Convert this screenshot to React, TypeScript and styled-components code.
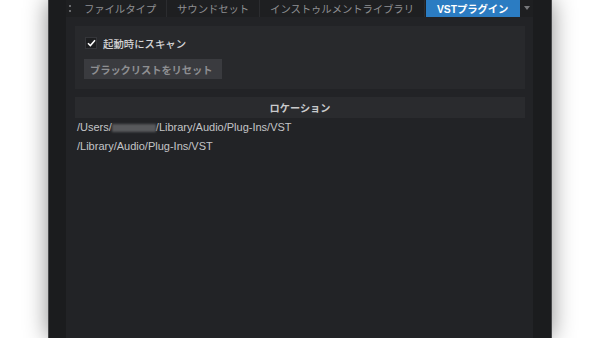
import styled, { createGlobalStyle } from "styled-components";

const GlobalStyle = createGlobalStyle`
  html, body {
    margin: 0;
    padding: 0;
    background: #ffffff;
    overflow: hidden;
  }
  body {
    font-family: "Liberation Sans", "Noto Sans CJK JP", sans-serif;
  }
`;

const Page = styled.div`
  width: 600px;
  height: 338px;
  display: flex;
  padding-left: 48px;
  box-sizing: border-box;
  overflow: hidden;
`;

const Window = styled.div`
  width: 504px;
  height: 338px;
  box-sizing: border-box;
  background: #1b1c1e;
  border-left: 1px solid #48494b;
  border-right: 1px solid #48494b;
  box-shadow: 0 0 22px rgba(0, 0, 0, 0.45);
  padding: 0 18px 0 17px;
  display: flex;
`;

const Panel = styled.div`
  flex: 1;
  display: flex;
  flex-direction: column;
  background: #222326;
`;

const TabBar = styled.div`
  height: 17px;
  display: flex;
  align-items: stretch;
  background: #1e1f21;
`;

const Grip = styled.div`
  width: 8px;
  display: flex;
  flex-direction: column;
  align-items: center;
  justify-content: center;
  gap: 3px;

  span {
    width: 2px;
    height: 2px;
    background: #6a6b6e;
  }
`;

const Tab = styled.div<{ $active?: boolean }>`
  display: flex;
  align-items: center;
  padding: ${p => (p.$active ? "0 11px" : "0 10px")};
  margin-left: ${p => (p.$active ? "1px" : "0")};
  font-size: 10.4px;
  letter-spacing: -0.1px;
  color: ${p => (p.$active ? "#ffffff" : "#8f9093")};
  background: ${p => (p.$active ? "#2b7cc2" : "transparent")};
  font-weight: ${p => (p.$active ? 600 : 400)};
  border-right: 1px solid ${p => (p.$active ? "transparent" : "#2b2c2f")};
  white-space: nowrap;
`;

const Arrow = styled.div`
  width: 0;
  height: 0;
  margin: 6px 0 0 4px;
  border-left: 3px solid transparent;
  border-right: 3px solid transparent;
  border-top: 4px solid #77787b;
`;

const Content = styled.div`
  flex: 1;
  display: flex;
  flex-direction: column;
  padding: 9px 8px 0 9px;
`;

const SettingsBox = styled.div`
  background: #28292c;
  padding: 11px 10px 10px 9px;
  display: flex;
  flex-direction: column;
  align-items: flex-start;
  gap: 10px;
`;

const CheckRow = styled.label`
  display: flex;
  align-items: center;
  gap: 6px;
  padding-left: 1px;
  font-size: 10.4px;
  color: #d4d4d6;
  font-weight: 500;
  height: 12px;
`;

const CheckBox = styled.span`
  width: 12px;
  height: 12px;
  box-sizing: border-box;
  background: #1d1e20;
  border: 1px solid #35363a;
  display: flex;
  align-items: center;
  justify-content: center;
`;

const ResetButton = styled.div`
  width: 138px;
  height: 20px;
  box-sizing: border-box;
  background: #3a3b3f;
  color: #8e8f92;
  font-size: 10.3px;
  font-weight: 600;
  display: flex;
  align-items: center;
  padding-left: 6px;
  letter-spacing: -0.1px;
`;

const LocationHeader = styled.div`
  margin-top: 8px;
  height: 21px;
  background: #2a2b2e;
  display: flex;
  align-items: center;
  justify-content: center;
  font-size: 10.2px;
  font-weight: 700;
  color: #c9cacc;
`;

const PathList = styled.div`
  display: flex;
  flex-direction: column;
  padding-left: 2px;
`;

const PathRow = styled.div`
  height: 19px;
  line-height: 19px;
  font-size: 11px;
  color: #c4c5c7;
  white-space: nowrap;
`;

const Blurred = styled.span`
  display: inline-block;
  width: 44px;
  height: 8px;
  vertical-align: -1px;
  background: #58595c;
  filter: blur(1.2px);
`;

export default function App(): JSX.Element {
  return (
    <>
      <GlobalStyle />
      <Page>
        <Window>
          <Panel>
            <TabBar>
              <Grip>
                <span />
                <span />
              </Grip>
              <Tab>ファイルタイプ</Tab>
              <Tab>サウンドセット</Tab>
              <Tab>インストゥルメントライブラリ</Tab>
              <Tab $active>VSTプラグイン</Tab>
              <Arrow />
            </TabBar>
            <Content>
              <SettingsBox>
                <CheckRow>
                  <CheckBox>
                    <svg width="9" height="8" viewBox="0 0 9 8">
                      <path d="M1 4.2 L3.4 6.6 L8 1.2" fill="none" stroke="#ffffff" strokeWidth="1.5" />
                    </svg>
                  </CheckBox>
                  起動時にスキャン
                </CheckRow>
                <ResetButton>ブラックリストをリセット</ResetButton>
              </SettingsBox>
              <LocationHeader>ロケーション</LocationHeader>
              <PathList>
                <PathRow>
                  /Users/<Blurred />/Library/Audio/Plug-Ins/VST
                </PathRow>
                <PathRow>/Library/Audio/Plug-Ins/VST</PathRow>
              </PathList>
            </Content>
          </Panel>
        </Window>
      </Page>
    </>
  );
}
